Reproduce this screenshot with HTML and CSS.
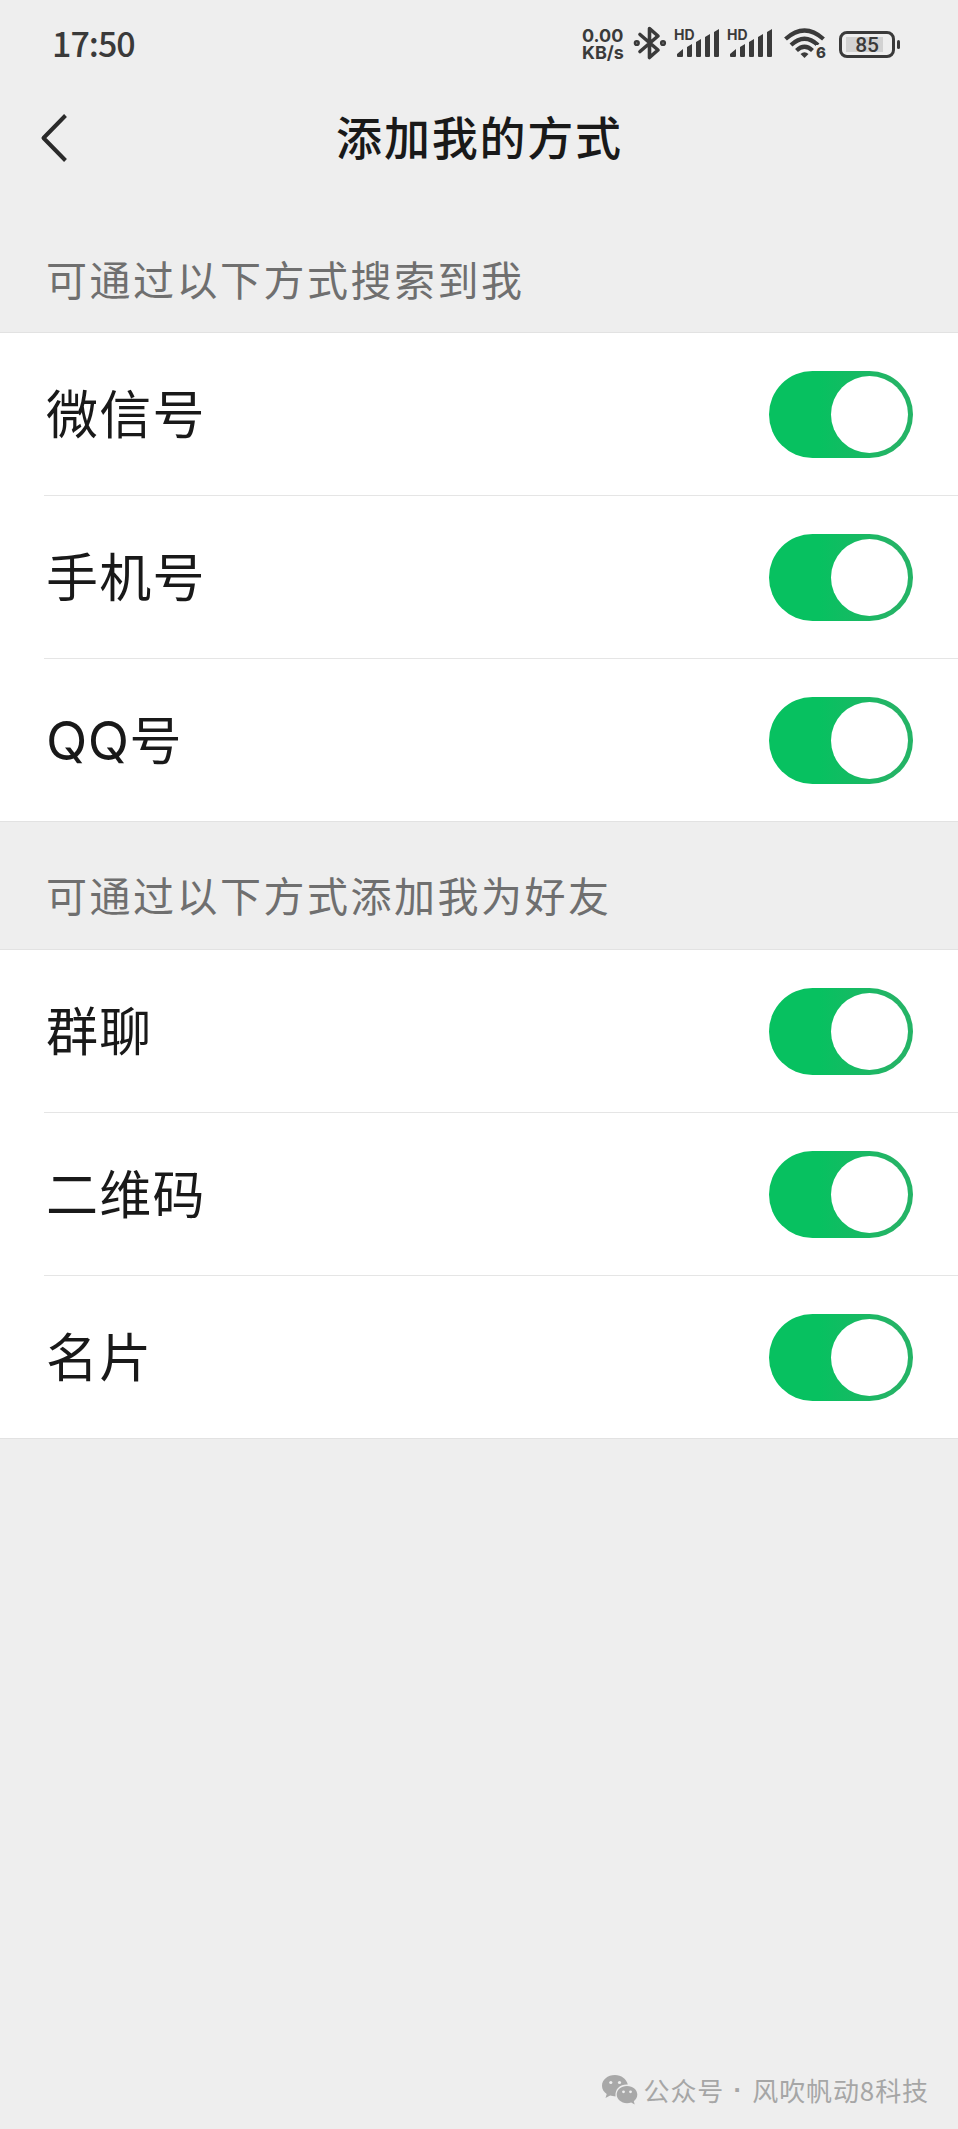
FILE: index.html
```html
<!DOCTYPE html>
<html lang="zh-CN">
<head>
<meta charset="utf-8">
<title>添加我的方式</title>
<link rel="stylesheet" href="styles.css">
</head>
<body>
<div class="screen">
  <header class="status">
    <span class="clock">17:50</span>
    <div class="speed"><span>0.00</span><span>KB/s</span></div>
    <svg class="bluetooth" width="34" height="36" viewBox="0 0 34 36" fill="none" stroke="#3a3a3a" stroke-width="3.600" stroke-linejoin="round" stroke-linecap="round"><path d="M7 9.500L25 25L16.500 32.500V3.500L25 11L7 26.500"/><circle cx="3.800" cy="18" r="1.300"/><circle cx="30" cy="18" r="1.300"/></svg>
    <div class="signal"><span class="hd">HD</span><svg width="46" height="30" viewBox="0 0 46 30" fill="#3a3a3a"><path d="M2 25l6-5v7q0 1-1 1H3q-1 0-1-1zM12 18l5-3v12q0 1-1 1h-3q-1 0-1-1zM21 13l5-3v17q0 1-1 1h-3q-1 0-1-1zM30 8l5-3v22q0 1-1 1h-3q-1 0-1-1zM39 3l5-3v27q0 1-1 1h-3q-1 0-1-1z"/></svg></div>
    <div class="signal"><span class="hd">HD</span><svg width="46" height="30" viewBox="0 0 46 30" fill="#3a3a3a"><path d="M2 25l6-5v7q0 1-1 1H3q-1 0-1-1zM12 18l5-3v12q0 1-1 1h-3q-1 0-1-1zM21 13l5-3v17q0 1-1 1h-3q-1 0-1-1zM30 8l5-3v22q0 1-1 1h-3q-1 0-1-1zM39 3l5-3v27q0 1-1 1h-3q-1 0-1-1z"/></svg></div>
    <div class="wifi"><svg width="42" height="32" viewBox="0 0 42 32" fill="none" stroke="#3a3a3a" stroke-width="4.200"><path d="M1.500 11Q20.500-6 39.500 11M7 17Q20.500 4.500 34 17M12.500 22.500Q20.500 15 28.500 22.500"/><path d="M16.500 26Q20.500 22.500 24.500 26L20.500 30z" fill="#3a3a3a" stroke="none"/></svg><span class="wifi-gen">6</span></div>
    <div class="battery"><div class="battery-body"><div class="battery-level">85</div></div><i class="battery-tip"></i></div>
  </header>
  <nav class="bar">
    <svg class="back" width="30" height="52" viewBox="0 0 30 52" fill="none" stroke="#2a2a2a" stroke-width="4"><path d="M25.500 3.500L3.500 26L25.500 48.500" stroke-linejoin="round"/></svg>
    <h1>添加我的方式</h1>
  </nav>
  <h2 class="caption caption-first">可通过以下方式搜索到我</h2>
  <section class="list">
    <div class="row"><span>微信号</span><i class="toggle"></i></div>
    <div class="row"><span>手机号</span><i class="toggle"></i></div>
    <div class="row"><span><span class="latin">QQ</span>号</span><i class="toggle"></i></div>
  </section>
  <h2 class="caption">可通过以下方式添加我为好友</h2>
  <section class="list">
    <div class="row"><span>群聊</span><i class="toggle"></i></div>
    <div class="row"><span>二维码</span><i class="toggle"></i></div>
    <div class="row"><span>名片</span><i class="toggle"></i></div>
  </section>
  <footer class="source">
    <svg width="36" height="30" viewBox="0 0 36 30" fill="#a8a8a8"><path d="M13 0C5.500 0 0 4.800 0 10.800c0 3.500 1.800 6.300 4.700 8.200L3.500 23l4.600-2.400q2.400.8 5.400.8C12.800 13.500 18.500 9 25.800 9.500 24.500 4 19.300 0 13 0z"/><path d="M25 11c-6 0-10.300 3.900-10.300 8.600S19 28.200 25 28.200q2.300 0 4.200-.6l3.500 2-.9-3.400c2.200-1.600 3.500-3.900 3.500-6.600C35.300 14.900 31 11 25 11z"/><g fill="#eee"><circle cx="8.800" cy="7.500" r="1.600"/><circle cx="17.500" cy="7.500" r="1.600"/><circle cx="21.500" cy="16.800" r="1.400"/><circle cx="28.500" cy="16.800" r="1.400"/></g></svg>
    <span>公众号</span><b class="dot">·</b><span>风吹帆动8科技</span>
  </footer>
</div>
</body>
</html>
```
FILE: styles.css
```css
* { box-sizing: border-box; margin: 0; padding: 0; }
body { background: #eee; font-family: "Noto Sans CJK SC", sans-serif; color: #191919; }
.screen { height: 2129px; display: flex; flex-direction: column; overflow: hidden; }
.status { height: 88px; display: flex; align-items: center; padding: 0 58px 0 52px; color: #3a3a3a; }
.clock { font: 500 34px/40px "Noto Sans CJK SC", sans-serif; letter-spacing: -1px; margin-right: auto; padding-bottom: 3px; }
.speed { width: 43px; display: flex; flex-direction: column; font: 700 18px/17px Inter, sans-serif; margin-right: 8px; }
.bluetooth { margin-right: 8px; margin-bottom: 2px; }
.signal { position: relative; width: 46px; height: 30px; margin-right: 7px; }
.signal svg { display: block; }
.hd { position: absolute; left: -1px; top: -1px; font: 700 14px/14px Inter, sans-serif; }
.wifi { position: relative; width: 42px; height: 32px; margin: 0 13px 0 3px; }
.wifi-gen { position: absolute; left: 32px; top: 17px; font: 800 15px/15px Inter, sans-serif; background: #eee; }
.battery { display: flex; align-items: center; gap: 2px; }
.battery-body { width: 56px; height: 27px; border: 3px solid #3a3a3a; border-radius: 8px; padding: 3px 9px 3px 4px; }
.battery-level { height: 15px; background: #d2d2d2; font: 500 21px/16px Roboto, sans-serif; text-align: right; padding-right: 4px; }
.battery-tip { width: 3px; height: 9px; border-radius: 2px; background: #3a3a3a; }
.bar { height: 101px; display: grid; grid-template-columns: 39px 1fr 39px; align-items: center; }
.back { margin: 0 0 1px 40px; }
.bar h1 { font-size: 46px; line-height: 60px; font-weight: 500; letter-spacing: 1.8px; text-align: center; padding: 0 0 7px 1px; }
.caption { height: 128px; padding: 42px 0 0 46px; font-size: 41px; line-height: 60px; font-weight: 400; letter-spacing: 2.5px; color: #6f6f6f; white-space: nowrap; }
.caption-first { height: 144px; padding-top: 59px; }
.list { height: 489px; background: #fff; box-shadow: 0 -1px #e2e2e2, inset 0 -1px #e2e2e2; }
.row { height: 163px; margin-left: 44px; padding: 0 45px 0 2px; display: flex; align-items: center; justify-content: space-between; font-size: 52px; letter-spacing: 1.2px; }
.row > span { padding-bottom: 7px; }
.latin { font: 400 54px/1 Inter, sans-serif; letter-spacing: 0.4px; }
.row + .row { box-shadow: 0 -1px #e5e5e5; }
.toggle { width: 144px; height: 87px; border-radius: 44px; border: 5px solid transparent; display: flex; justify-content: flex-end; background: linear-gradient(90deg, #07c160 35%, #24b466 85%) border-box; }
.toggle::after { content: ""; width: 77px; height: 77px; border-radius: 50%; background: #fff; }
.source { margin-top: auto; height: 78px; padding: 0 29px 0 0; display: flex; align-items: center; justify-content: flex-end; color: #a6a6a6; font-size: 26px; line-height: 38px; letter-spacing: 0.9px; }
.source svg { margin-right: 6px; }
.dot { width: 28px; text-align: center; font-family: "Liberation Sans", sans-serif; }
```
